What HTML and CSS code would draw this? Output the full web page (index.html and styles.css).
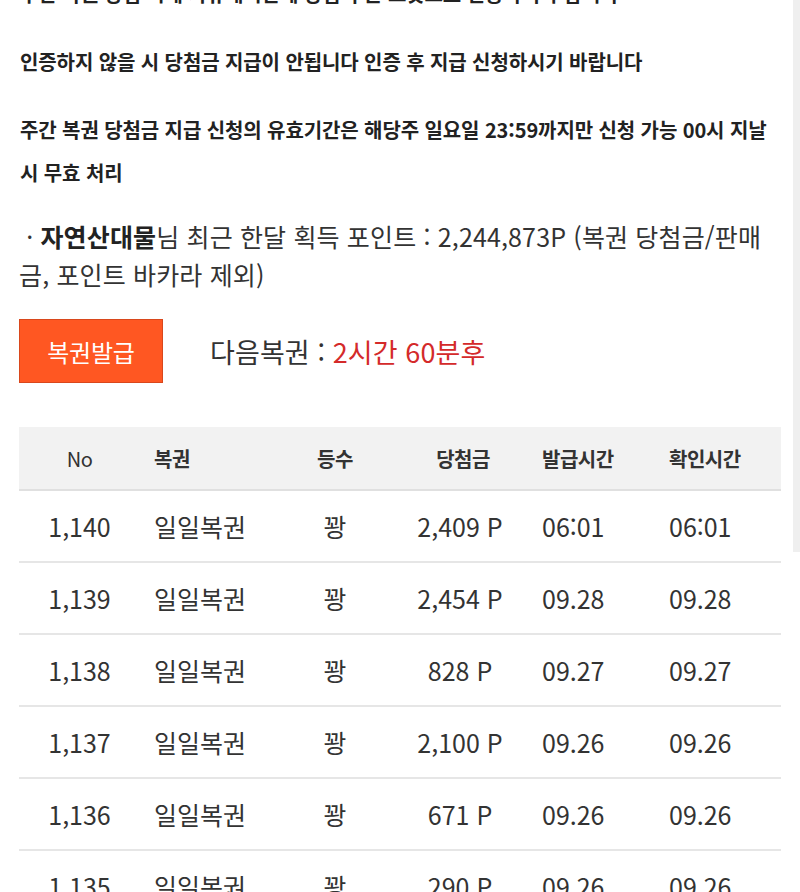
FILE: index.html
```html
<!DOCTYPE html>
<html lang="ko">
<head>
<meta charset="utf-8">
<title>복권</title>
<link rel="stylesheet" href="styles.css">
</head>
<body>
<div class="page">
  <div class="notice">
    <p class="note">주간 복권 당첨 시에 자유게시판에 당첨 부분 스샷으로 인증하셔야 합니다</p>
    <p class="note">인증하지 않을 시 당첨금 지급이 안됩니다 인증 후 지급 신청하시기 바랍니다</p>
    <p class="note">주간 복권 당첨금 지급 신청의 유효기간은 해당주 일요일 23:59까지만 신청 가능 00시 지날 시 무효 처리</p>
  </div>
  <p class="points">&nbsp;· <b>자연산대물</b>님 최근 한달 획득 포인트 : 2,244,873P (복권 당첨금/판매금, 포인트 바카라 제외)</p>
  <div class="issue">
    <button class="btn">복권발급</button>
    <span class="next">다음복권 : <span class="red">2시간 60분후</span></span>
  </div>
  <div class="table">
    <div class="row head">
      <div class="c1">No</div><div class="c2">복권</div><div class="c3">등수</div><div class="c4">당첨금</div><div class="c5">발급시간</div><div class="c6">확인시간</div>
    </div>
    <div class="row"><div class="c1">1,140</div><div class="c2">일일복권</div><div class="c3">꽝</div><div class="c4">2,409 P</div><div class="c5">06:01</div><div class="c6">06:01</div></div>
    <div class="row"><div class="c1">1,139</div><div class="c2">일일복권</div><div class="c3">꽝</div><div class="c4">2,454 P</div><div class="c5">09.28</div><div class="c6">09.28</div></div>
    <div class="row"><div class="c1">1,138</div><div class="c2">일일복권</div><div class="c3">꽝</div><div class="c4">828 P</div><div class="c5">09.27</div><div class="c6">09.27</div></div>
    <div class="row"><div class="c1">1,137</div><div class="c2">일일복권</div><div class="c3">꽝</div><div class="c4">2,100 P</div><div class="c5">09.26</div><div class="c6">09.26</div></div>
    <div class="row"><div class="c1">1,136</div><div class="c2">일일복권</div><div class="c3">꽝</div><div class="c4">671 P</div><div class="c5">09.26</div><div class="c6">09.26</div></div>
    <div class="row"><div class="c1">1,135</div><div class="c2">일일복권</div><div class="c3">꽝</div><div class="c4">290 P</div><div class="c5">09.26</div><div class="c6">09.26</div></div>
  </div>
</div>
<div class="scrollbar"></div>
</body>
</html>
```
FILE: styles.css
```css
html, body {
  margin: 0;
  padding: 0;
  background: #fff;
  overflow: hidden;
}
body {
  font-family: "Noto Sans CJK KR", "Noto Sans", sans-serif;
  color: #333;
}
.page {
  padding: 0 19px;
  margin-top: -28px;
}
.notice {
  display: flex;
  flex-direction: column;
  gap: 25px;
}
.note {
  margin: 0;
  padding-left: 1px;
  font-size: 20px;
  font-weight: 700;
  line-height: 43px;
  color: #222;
  letter-spacing: -0.1px;
}
.points {
  margin: 23px 0 0;
  font-size: 25px;
  line-height: 38px;
  color: #333;
  letter-spacing: 0.15px;
}
.points b {
  font-weight: 700;
  color: #222;
}
.issue {
  display: flex;
  align-items: center;
  margin-top: 26px;
  gap: 47px;
}
.btn {
  width: 144px;
  height: 64px;
  background: #ff5722;
  border: 1px solid #d9471c;
  color: #fff;
  font-family: inherit;
  font-size: 24px;
  letter-spacing: -0.2px;
  padding: 0;
}
.next {
  font-size: 27px;
  color: #333;
  letter-spacing: 0.1px;
}
.red {
  color: #d42a2a;
}
.table {
  margin-top: 44px;
}
.row {
  display: grid;
  grid-template-columns: 121px 135px 120px 130px 130px 126px;
  align-items: center;
  height: 70px;
  border-bottom: 2px solid #e6e6e6;
  font-size: 25px;
  color: #333;
  letter-spacing: 0;
}
.row.head {
  height: 62px;
  background: #f2f2f2;
  border-bottom: 2px solid #e0e0e0;
  font-size: 20px;
  font-weight: 700;
  color: #333;
  letter-spacing: -0.5px;
}
.head .c1 {
  font-weight: 400;
}
.c1, .c3, .c4 {
  text-align: center;
}
.c2 {
  padding-left: 14px;
}
.c5 {
  padding-left: 17px;
}
.c6 {
  padding-left: 14px;
}
.head .c4 {
  padding-left: 6px;
}
.scrollbar {
  position: fixed;
  top: 0;
  right: 0;
  width: 7px;
  height: 552px;
  background: #efefef;
}
```
